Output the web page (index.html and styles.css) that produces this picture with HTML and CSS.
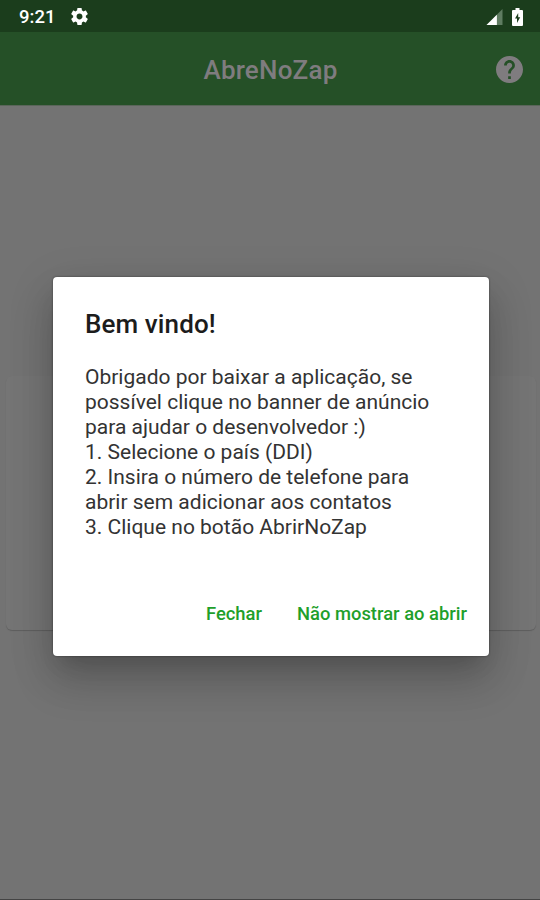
FILE: index.html
```html
<!DOCTYPE html>
<html lang="pt-BR">
<head>
    <meta charset="UTF-8">
    <meta name="viewport" content="width=device-width, initial-scale=1.0">
    <title>AbreNoZap</title>
    <link rel="stylesheet" href="styles.css">
</head>
<body>
    <div class="status-bar">
        <span class="clock">9:21</span>
        <svg class="gear-icon" viewBox="2 2 20 20">
            <path fill="#fff" d="M19.43 12.98c.04-.32.07-.64.07-.98s-.03-.66-.07-.98l2.11-1.65c.19-.15.24-.42.12-.64l-2-3.46c-.12-.22-.39-.3-.61-.22l-2.49 1c-.52-.4-1.08-.73-1.69-.98l-.38-2.65C14.46 2.18 14.25 2 14 2h-4c-.25 0-.46.18-.49.42l-.38 2.65c-.61.25-1.17.59-1.69.98l-2.49-1c-.23-.09-.49 0-.61.22l-2 3.46c-.13.22-.07.49.12.64l2.11 1.65c-.04.32-.07.65-.07.98s.03.66.07.98l-2.11 1.65c-.19.15-.24.42-.12.64l2 3.46c.12.22.39.3.61.22l2.49-1c.52.4 1.08.73 1.69.98l.38 2.65c.03.24.24.42.49.42h4c.25 0 .46-.18.49-.42l.38-2.65c.61-.25 1.17-.59 1.69-.98l2.49 1c.23.09.49 0 .61-.22l2-3.46c.12-.22.07-.49-.12-.64l-2.11-1.65zM12 15.5c-1.93 0-3.5-1.57-3.5-3.5s1.57-3.5 3.5-3.5 3.5 1.57 3.5 3.5-1.57 3.5-3.5 3.5z"/>
        </svg>
        <svg class="signal-icon" viewBox="0 0 17 17">
            <path fill="#5f7c61" d="M17 0v17H0z"/>
            <path fill="#fff" d="M11 6v11H0z"/>
        </svg>
        <svg class="battery-icon" viewBox="0 0 11 18">
            <path fill="#fff" d="M3.5 0h4v2H10a1 1 0 0 1 1 1v14a1 1 0 0 1-1 1H1a1 1 0 0 1-1-1V3a1 1 0 0 1 1-1h2.5z"/>
            <path fill="#1b3d1c" d="M6.2 5 3 10.5h2V15l3.2-5.800h-2z"/>
        </svg>
    </div>

    <header class="app-bar">
        <h1 class="app-title">AbreNoZap</h1>
        <svg class="help-icon" viewBox="2 2 20 20">
            <path fill="#7f7c7f" d="M12 2C6.48 2 2 6.48 2 12s4.48 10 10 10 10-4.48 10-10S17.52 2 12 2zm1 17h-2v-2h2v2zm2.07-7.75l-.9.92C13.45 12.9 13 13.5 13 15h-2v-.5c0-1.1.45-2.1 1.17-2.83l1.24-1.26c.37-.36.59-.86.59-1.41 0-1.1-.9-2-2-2s-2 .9-2 2H8c0-2.21 1.79-4 4-4s4 1.79 4 4c0 .88-.36 1.68-.93 2.25z"/>
        </svg>
    </header>

    <main class="page">
        <div class="card"></div>
    </main>

    <div class="overlay">
        <div class="dialog">
            <h2 class="dialog-title">Bem vindo!</h2>
            <p class="dialog-text">
                Obrigado por baixar a aplicação, se<br>
                possível clique no banner de anúncio<br>
                para ajudar o desenvolvedor :)<br>
                1. Selecione o país (DDI)<br>
                2. Insira o número de telefone para<br>
                abrir sem adicionar aos contatos<br>
                3. Clique no botão AbrirNoZap
            </p>
            <div class="dialog-actions">
                <button type="button" class="action">Fechar</button>
                <button type="button" class="action">Não mostrar ao abrir</button>
            </div>
        </div>
    </div>
</body>
</html>
```

FILE: styles.css
```css
/* --- General Setup --- */
:root {
    --status-green: #1b3d1c;
    --bar-green: #255027;
    --page-gray: #737373;
    --action-green: #1f9f2b;
}

* {
    box-sizing: border-box;
}

body {
    font-family: Roboto, "Noto Sans", sans-serif;
    margin: 0;
    height: 900px;
    display: flex;
    flex-direction: column;
    overflow: hidden;
    background-color: var(--page-gray);
}

/* --- Status Bar --- */
.status-bar {
    height: 32px;
    flex: none;
    display: flex;
    align-items: center;
    padding: 1px 17px 0 19px;
    background-color: var(--status-green);
    color: #fff;
}

.clock {
    font-size: 18.5px;
    font-weight: 500;
    width: 52px;
}

.gear-icon {
    width: 17px;
    height: 17px;
}

.signal-icon {
    width: 17px;
    height: 16px;
    margin-left: auto;
}

.battery-icon {
    width: 11px;
    height: 18px;
    margin-left: 9px;
}

/* --- App Bar --- */
.app-bar {
    height: 74px;
    flex: none;
    display: grid;
    grid-template-columns: 27px 1fr 27px;
    align-items: center;
    padding: 0 17px;
    background-color: var(--bar-green);
    border-bottom: 1px solid #5a655a;
}

.app-title {
    grid-column: 2;
    margin: 2px 0 0 1px;
    text-align: center;
    font-size: 26px;
    font-weight: 500;
    letter-spacing: 0.2px;
    color: #7f7c7f;
}

.help-icon {
    width: 27px;
    height: 27px;
    margin-top: 1px;
}

/* --- Page --- */
.page {
    flex: 1;
    padding: 270px 4px 0 6px;
    border-bottom: 1px solid #444;
}

.card {
    height: 254px;
    border-radius: 6px;
    background-color: #757575;
    box-shadow: 0 1px 1px rgba(0, 0, 0, 0.18);
}

/* --- Welcome Dialog --- */
.overlay {
    position: absolute;
    inset: 33px 0 0;
    display: flex;
    align-items: center;
    justify-content: center;
}

.dialog {
    width: 436px;
    height: 379px;
    margin-left: 2px;
    display: flex;
    flex-direction: column;
    padding: 31px 22px 20px 32px;
    border-radius: 4px;
    background-color: #fff;
    box-shadow: 0 14px 20px -9px rgba(0, 0, 0, 0.15),
                0 26px 42px 2px rgba(0, 0, 0, 0.14),
                0 12px 46px 4px rgba(0, 0, 0, 0.1),
                0 0 2px rgba(0, 0, 0, 0.5);
}

.dialog-title {
    margin: 0;
    font-size: 26px;
    line-height: 32px;
    font-weight: 500;
    letter-spacing: 0.1px;
    color: #1c1c1c;
}

.dialog-text {
    margin: 25px 0 0;
    font-size: 21px;
    line-height: 25px;
    white-space: nowrap;
    color: #333;
}

.dialog-actions {
    margin-top: auto;
    display: flex;
    justify-content: flex-end;
    gap: 35px;
}

.action {
    padding: 0;
    border: none;
    background: none;
    font-family: inherit;
    font-size: 18.4px;
    line-height: 44px;
    font-weight: 500;
    color: var(--action-green);
}
```
